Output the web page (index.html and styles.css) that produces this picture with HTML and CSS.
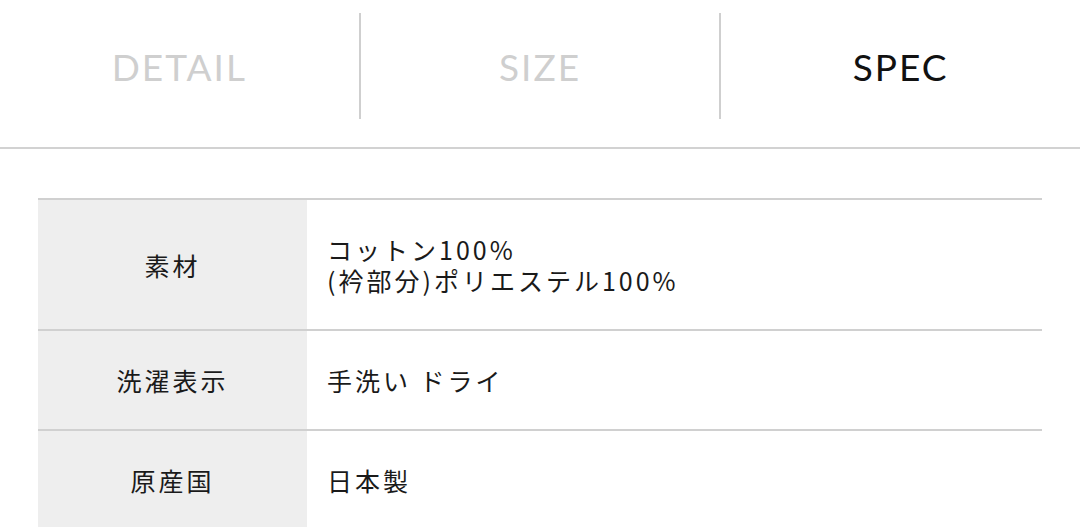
FILE: index.html
```html
<!DOCTYPE html>
<html lang="ja">
<head>
    <meta charset="UTF-8">
    <title>SPEC</title>
    <link rel="stylesheet" href="styles.css">
</head>
<body>
<div class="tabs">
    <div class="tab">DETAIL</div>
    <div class="tab">SIZE</div>
    <div class="tab tab-active">SPEC</div>
</div>
<div class="spec">
    <div class="spec-row">
        <div class="spec-label">素材</div>
        <div class="spec-value">
            <div class="spec-line">コットン100%</div>
            <div class="spec-line">(衿部分)ポリエステル100%</div>
        </div>
    </div>
    <div class="spec-row">
        <div class="spec-label">洗濯表示</div>
        <div class="spec-value">手洗い ドライ</div>
    </div>
    <div class="spec-row">
        <div class="spec-label">原産国</div>
        <div class="spec-value">日本製</div>
    </div>
</div>
</body>
</html>
```

FILE: styles.css
```css
body {
    margin: 0;
    background: #fff;
    font-family: "Noto Sans CJK JP", "Noto Sans", sans-serif;
    color: #1a1a1a;
    overflow: hidden;
}

.tabs {
    display: flex;
    padding: 13px 0 28px;
    border-bottom: 2px solid #d2d2d2;
}

.tab {
    flex: 1;
    height: 106px;
    display: flex;
    align-items: center;
    justify-content: center;
    font-family: Lato, "Liberation Sans", sans-serif;
    font-size: 37px;
    letter-spacing: 2px;
    color: #cfcfcf;
}

.tab + .tab {
    border-left: 2px solid #cfcfcf;
}

.tab-active {
    color: #111;
}

.spec {
    margin: 49px 38px 0;
    border-top: 2px solid #d0d0d0;
}

.spec-row {
    display: flex;
    border-bottom: 2px solid #d0d0d0;
}

.spec-label {
    width: 269px;
    background: #eeeeee;
    display: flex;
    align-items: center;
    justify-content: center;
    font-size: 25px;
    letter-spacing: 3px;
}

.spec-value {
    flex: 1;
    padding: 34px 20px 33px;
    font-size: 25px;
    line-height: 31px;
    letter-spacing: 3px;
}
```
